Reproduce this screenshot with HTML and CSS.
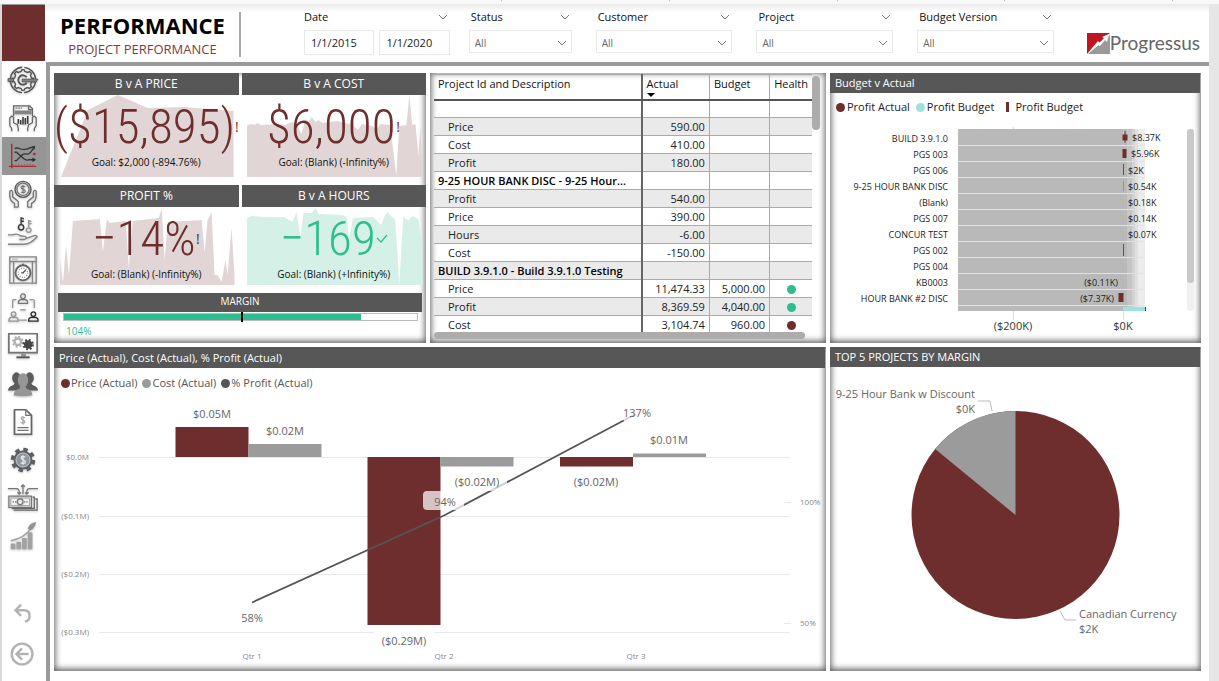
FILE: index.html
```html
<!DOCTYPE html>
<html lang="en">
<head>
<meta charset="utf-8">
<meta name="viewport" content="width=device-width, initial-scale=1">
<title>Project Performance</title>
<link rel="stylesheet" href="styles.css">
</head>
<body>
<svg class="sprite" aria-hidden="true">
  <symbol id="chev" viewBox="0 0 12 8"><path d="M2 2l4 4 4-4" fill="none" stroke="#777" stroke-width="1"/></symbol>
  <symbol id="person" viewBox="0 0 12 12"><circle cx="6" cy="3.5" r="2.5"/><path d="M1 11V9.500Q1.500 7 4 7h4q2.500 0 3 2.500V11z"/></symbol>
</svg>
<div class="toolbar-edge"><i></i><i></i><i></i><i></i><i></i></div>
<div class="shell">
  <aside class="side">
    <div class="brand-block"></div>
    <nav class="nav" aria-label="Report pages">
      <button aria-label="Overview"><svg viewBox="0 0 34 34"><g fill="none" stroke="#444" stroke-width="1.500"><circle cx="17" cy="17" r="13.500" stroke-dasharray="19 2.200" stroke-dashoffset="-1"/><path d="M15 8l1-2h2l1 2 3 1 2-1 2 2-1 2 1 3h2v4h-2l-1 3 1 2-2 2-2-1-3 1-1 2h-2l-1-2-3-1-2 1-2-2 1-2-1-3H6v-4h2l1-3-1-2 2-2 2 1z"/><path d="M21 14a5 5 0 1 0 0 6" stroke-width="2"/></g><path d="M1 15.500h6v3H1zM16 16h17l-2 3H16z" fill="#777" stroke="#333" stroke-width=".7"/></svg></button>
      <button aria-label="Reports"><svg viewBox="0 0 34 34"><g fill="none" stroke="#555" stroke-width="1.300"><path d="M7 15V4h17l3 3v8M23 4v4h4"/><path d="M5 31v-3l-2-3v-8l2-2 2 1v6l4 2 1 4v3M29 31v-3l2-3v-8l-2-2-2 1v6l-4 2-1 4v3"/></g><path d="M8 9h18v4H8z" fill="#777"/><path d="M9 6.500h7" stroke="#444" stroke-dasharray="2 1"/><path d="M12 23v-5M14.500 24v-5M17 24v-8M19.500 24v-7M22 23v-8" stroke="#222" stroke-width="1.600"/></svg></button>
      <button aria-label="Performance" class="active" aria-current="page"><svg viewBox="0 0 34 34"><path d="M5 4v26M2 28h29" fill="none" stroke="#a8252b" stroke-width="1.500"/><path d="M6 26.500h24" stroke="#a8252b" stroke-dasharray="1 2"/><g fill="none" stroke="#2a2a2a" stroke-width="1.400"><path d="M8 9q3-1 5 0t5 1q4 0 5-1t4-1"/><path d="M8 13h2l8 7q2 2 5 1h5"/><path d="M8 22h2l6-6q2-2 5-1 3 0 4-2l4-5"/></g><path d="M26 7l4-1-1 4zM27 18.500l4 2.500-4 2.500z" fill="#222"/><circle cx="29" cy="15" r="1.500" fill="#a8252b"/></svg></button>
      <button aria-label="Profit"><svg viewBox="0 0 34 34"><g fill="none" stroke="#666" stroke-width="1.400"><circle cx="17" cy="12" r="8.500" stroke="#444"/><circle cx="17" cy="12" r="6.500"/><path d="M3 19v-5q2-2 3 1v5l6 5v6M3 19q0 5 5 8v4h4M31 19v-5q-2-2-3 1v5l-6 5v6M31 19q0 5-5 8v4h-4M6 20l5 4M28 20l-5 4"/><path d="M19.500 9.500q-4-2-4.500.5c0 2.500 4.500 1.500 4.500 4q-.5 2.500-5 .8M17 7.500v9" stroke-width="1.200"/></g></svg></button>
      <button aria-label="Rates"><svg viewBox="0 0 34 34"><g fill="none"><circle cx="15" cy="12" r="2.800" stroke="#222" stroke-width="1.500"/><path d="M15 9V2l3 1M15 5.500h3" stroke="#222" stroke-width="1.500"/><circle cx="23" cy="15" r="2.500" stroke="#888" stroke-width="1.300"/><path d="M23 12V5l3 1M23 8h3" stroke="#888" stroke-width="1.300"/><path d="M1 20h5q5-2 8 1l6 1q2 2-2 3h-5M20 24l8-3q4-1 4 1-7 8-14 8H1" stroke="#777" stroke-width="1.400"/></g></svg></button>
      <button aria-label="Time"><svg viewBox="0 0 34 34"><g fill="none" stroke="#777" stroke-width="1.400"><path d="M3 3h28v28H3zM3 8h28M7 8v22M27 8v22"/><circle cx="17" cy="20" r="8" fill="#fff" stroke="#555" stroke-width="2"/><circle cx="17" cy="20" r="5" stroke-dasharray="1 1.600"/><path d="M17 10v2M17 20l3-3M15 20h3" stroke="#444"/></g><path d="M6 5.500h6" stroke="#555" stroke-dasharray="1 1"/></svg></button>
      <button aria-label="Team"><svg viewBox="0 0 34 34" fill="none" stroke="#888" stroke-width="1.300"><use href="#person" x="11" y="1" width="12" height="12" stroke="#666"/><use href="#person" x="1" y="20" width="12" height="12"/><use href="#person" x="22" y="20" width="12" height="12" stroke="#111"/><path d="M10 8H7q-1 0-1 1v8M24 8h3q2 0 2 1v8M14 19h6M13 30h8"/></svg></button>
      <button aria-label="Systems"><svg viewBox="0 0 34 34"><path d="M2 4h30v20H2z" fill="#fff" stroke="#666" stroke-width="1.800"/><path d="M15 25h5v3h-5z" fill="#888"/><path d="M10 29h14" stroke="#444" stroke-width="2"/><circle cx="11.500" cy="12.500" r="3.500" fill="none" stroke="#aaa" stroke-width="2.500"/><circle cx="11.500" cy="12.500" r="5.300" fill="none" stroke="#aaa" stroke-width="2" stroke-dasharray="2 2.160"/><circle cx="22.500" cy="15.500" r="4.500" fill="#333"/><circle cx="22.500" cy="15.500" r="5" fill="none" stroke="#333" stroke-width="2.200" stroke-dasharray="2 1.930"/></svg></button>
      <button aria-label="Customers"><svg viewBox="0 0 34 34"><g fill="#4b4b4b"><ellipse cx="10" cy="10.500" rx="4.500" ry="6"/><ellipse cx="24" cy="10.500" rx="4.500" ry="6"/><path d="M1 24q0-4 6-6l2-3h16l2 3q6 2 6 6z"/></g><g fill="#8b8b8b"><ellipse cx="17" cy="13" rx="5.500" ry="7.500"/><path d="M7 29q0-5 6-7l2-4h4l2 4q6 2 6 7-10 2-20 0z"/></g></svg></button>
      <button aria-label="Invoices"><svg viewBox="0 0 34 34"><path d="M8 4h12l6 6v20H8z" fill="#fff" stroke="#555" stroke-width="1.800"/><path d="M20 4v6h6M11 23h12M11 26h12" fill="none" stroke="#666" stroke-width="1.300"/><path d="M19 12.500q-4-2-4 .6c0 2.500 4 1.300 4 3.900q-.5 2.300-4.500.6M17 11v9" fill="none" stroke="#999" stroke-width="1.200"/></svg></button>
      <button aria-label="Costs"><svg viewBox="0 0 34 34"><circle cx="17" cy="17" r="10" fill="#4a4f55"/><circle cx="17" cy="17" r="11" fill="none" stroke="#4a4f55" stroke-width="4" stroke-dasharray="4.600 4.040"/><circle cx="17" cy="17" r="7.500" fill="#858b94" stroke="#c4c8ce"/><path d="M19.500 14q-4-2-4.500.7c0 2.800 5 1.600 4.500 4.500q-.5 2.500-5 .8M17 12v10" fill="none" stroke="#e5e7ea" stroke-width="1.400"/></svg></button>
      <button aria-label="Cash flow"><svg viewBox="0 0 34 34" fill="none" stroke="#666" stroke-width="1.300"><path d="M1 7h9q3 0 3 4v2M11 11l2 2 2-2M33 7h-9q-3 0-3 4v2M19 11l2 2 2-2M17 13V3M15 5l2-2 2 2"/><path d="M2 15h24v12H2z"/><path d="M4 17h20v8H4z" stroke="#888" stroke-width=".8"/><path d="M27 16h2v12H5M30 18h2v12H7" stroke="#555"/><circle cx="14" cy="21" r="3"/><path d="M6 21h4M18 21h5" stroke-dasharray="1.500 1"/></svg></button>
      <button aria-label="Growth"><svg viewBox="0 0 34 34" fill="#999"><path d="M4 25h5v6H4zM10 23h5v8h-5zM16 19h5v12h-5zM22 13h5v18h-5z"/><path d="M4 22Q19 19 26 8" fill="none" stroke="#999" stroke-width="1.500"/><path d="M22 9q2-6 9-7-1 6-6 9z" fill="#888"/></svg></button>
    </nav>
    <div class="nav tail">
      <button aria-label="Undo"><svg viewBox="0 0 34 34" fill="none" stroke="#aaa" stroke-width="2.500"><path d="M15 7l-6 6 6 6M9 13h9q6 0 6 6 0 5-5 6"/></svg></button>
      <button aria-label="Back"><svg viewBox="0 0 34 34" fill="none" stroke="#aaa" stroke-width="2.500"><circle cx="16" cy="17" r="11"/><path d="M16 11l-6 6 6 6M10 17h13"/></svg></button>
    </div>
  </aside>

  <div class="page">
    <header class="top">
      <div class="titles">
        <h1>PERFORMANCE</h1>
        <p>PROJECT PERFORMANCE</p>
      </div>
      <form class="slicers">
        <div class="slicer date">
          <div class="slicer-head"><label for="from">Date</label><button type="button" aria-label="Date options"><svg><use href="#chev"/></svg></button></div>
          <div class="range"><input id="from" type="text" value="1/1/2015"><input type="text" aria-label="End date" value="1/1/2020"></div>
        </div>
        <div class="slicer narrow">
          <div class="slicer-head"><label for="status">Status</label><button type="button" aria-label="Status options"><svg><use href="#chev"/></svg></button></div>
          <div class="pick"><select id="status"><option>All</option></select><svg><use href="#chev"/></svg></div>
        </div>
        <div class="slicer">
          <div class="slicer-head"><label for="customer">Customer</label><button type="button" aria-label="Customer options"><svg><use href="#chev"/></svg></button></div>
          <div class="pick"><select id="customer"><option>All</option></select><svg><use href="#chev"/></svg></div>
        </div>
        <div class="slicer">
          <div class="slicer-head"><label for="project">Project</label><button type="button" aria-label="Project options"><svg><use href="#chev"/></svg></button></div>
          <div class="pick"><select id="project"><option>All</option></select><svg><use href="#chev"/></svg></div>
        </div>
        <div class="slicer">
          <div class="slicer-head"><label for="version">Budget Version</label><button type="button" aria-label="Budget Version options"><svg><use href="#chev"/></svg></button></div>
          <div class="pick"><select id="version"><option>All</option></select><svg><use href="#chev"/></svg></div>
        </div>
      </form>
      <div class="logo">
        <svg viewBox="0 0 23 21" aria-hidden="true"><path d="M0 0h23L0 21z" fill="#bf1722"/><path d="M23 2v19H1z" fill="#9a9a9a"/><path d="M0 21L11 8l2 2 4-5-2-1 7-3-2 8-2-2-5 6-2-1z" fill="#fff"/></svg>
        <span>Progressus</span>
      </div>
    </header>

    <main class="board">
      <section class="panel kpis">
        <div class="kpi-grid">
          <article class="kpi bad">
            <h2>B v A PRICE</h2>
            <div class="kpi-body">
              <svg class="spark" viewBox="0 0 185 82" preserveAspectRatio="none"><path d="M7 82L34 15 64 0 94 13 131 12 155 14 180 16V82z"/></svg>
              <div class="kpi-text"><div class="value">($15,895)<span class="mark">!</span></div><p>Goal: $2,000 (-894.76%)</p></div>
            </div>
          </article>
          <article class="kpi bad">
            <h2>B v A COST</h2>
            <div class="kpi-body">
              <svg class="spark" viewBox="0 0 183 82" preserveAspectRatio="none"><path d="M5 82V30L9 29 13 30 15 28 19 30 37 29 42 30 50 27 55 30 59 39 63 24 66 27 69 22 73 27 76 25 80 28 94 26 107 29 109 21 111 31 115 35 119 29 129 31 134 34 137 29 147 30 153 81 156 31 163 30 166 1 169 30 172 29 175 61 177 31 179 82z"/></svg>
              <div class="kpi-text"><div class="value">$6,000<span class="mark">!</span></div><p>Goal: (Blank) (-Infinity%)</p></div>
            </div>
          </article>
          <article class="kpi bad low">
            <h2>PROFIT %</h2>
            <div class="kpi-body">
              <svg class="spark" viewBox="0 0 185 78" preserveAspectRatio="none"><path d="M6 78V52L9 76 12 38 15 68 19 14 46 12 49 45 53 12 56 16 72 14 75 61 79 14 105 11 108 2 111 53 114 15 148 13 151 45 154 13 158 5 161 68 164 68 168 75 172 53 174 68 178 21 181 68V78z"/></svg>
              <div class="kpi-text"><div class="value">−14%<span class="mark dark">!</span></div><p>Goal: (Blank) (-Infinity%)</p></div>
            </div>
          </article>
          <article class="kpi good low">
            <h2>B v A HOURS</h2>
            <div class="kpi-body">
              <svg class="spark" viewBox="0 0 183 78" preserveAspectRatio="none"><path d="M5 78V11L10 9 24 10 42 10 50 15 54 5 58 30 61 6 69 6 73 1 76 7 100 8 104 10 106 33 110 11 130 10 138 18 141 10 144 5 149 10 152 12 156 77 160 10 165 13 169 9 175 12 179 40V78z"/></svg>
              <div class="kpi-text"><div class="value">−169<svg class="tick" viewBox="0 0 12 10"><path d="M1 4l4 4 6-7" fill="none" stroke="#2ebd90" stroke-width="1.200"/></svg></div><p>Goal: (Blank) (+Infinity%)</p></div>
            </div>
          </article>
        </div>
        <div class="margin-box">
          <h2>MARGIN</h2>
          <div class="gauge"><div class="fill" style="width:84%"></div><i></i></div>
          <p>104%</p>
        </div>
      </section>

      <section class="panel matrix">
        <div class="scroll-x">
          <table>
            <colgroup><col class="c1"><col class="c2"><col class="c3"><col class="c4"></colgroup>
            <thead><tr><th>Project Id and Description</th><th><span class="sorted">Actual</span></th><th>Budget</th><th>Health</th></tr></thead>
            <tbody>
              <tr><td></td><td></td><td></td><td></td></tr>
              <tr><td>Price</td><td>590.00</td><td></td><td></td></tr>
              <tr><td>Cost</td><td>410.00</td><td></td><td></td></tr>
              <tr><td>Profit</td><td>180.00</td><td></td><td></td></tr>
              <tr class="group"><td>9-25 HOUR BANK DISC - 9-25 Hour...</td><td></td><td></td><td></td></tr>
              <tr><td>Profit</td><td>540.00</td><td></td><td></td></tr>
              <tr><td>Price</td><td>390.00</td><td></td><td></td></tr>
              <tr><td>Hours</td><td>-6.00</td><td></td><td></td></tr>
              <tr><td>Cost</td><td>-150.00</td><td></td><td></td></tr>
              <tr class="group"><td>BUILD 3.9.1.0 - Build 3.9.1.0 Testing</td><td></td><td></td><td></td></tr>
              <tr><td>Price</td><td>11,474.33</td><td>5,000.00</td><td><span class="dot ok"></span></td></tr>
              <tr><td>Profit</td><td>8,369.59</td><td>4,040.00</td><td><span class="dot ok"></span></td></tr>
              <tr><td>Cost</td><td>3,104.74</td><td>960.00</td><td><span class="dot off"></span></td></tr>
            </tbody>
          </table>
          <div class="bar-y"></div>
        </div>
        <div class="bar-x"></div>
      </section>

      <section class="panel">
        <h2 class="bar-title">Budget v Actual</h2>
        <ul class="legend dark-text">
          <li><span class="key maroon"></span>Profit Actual</li>
          <li><span class="key aqua"></span>Profit Budget</li>
          <li><span class="key stick"></span>Profit Budget</li>
        </ul>
        <svg class="chart" viewBox="0 0 371 226">
          <path d="M128 14h187v182H128z" fill="#ececec"/>
          <path d="M128 14h180v182H128z" fill="#e0e0e0"/><path d="M128 14h177v182H128z" fill="#d2d2d2"/><path d="M128 14h174v182H128z" fill="#c5c5c5"/><path d="M128 14h169v182H128z" fill="#b9b9b9"/>
          <path d="M128 30.500h187M128 46.500h187M128 62.500h187M128 78.500h187M128 94.500h187M128 110.500h187M128 126.500h187M128 142.500h187M128 158.500h187M128 174.500h187M128 190.500h187" stroke="#e2e2e2"/>
          <path d="M183.500 196v9M293.500 196v9M183.500 12v2" stroke="#ddd"/>
          <path d="M293 16h1v12h-1z" fill="#98e3dc"/>
          <path d="M292.500 19.500h5v6h-5zM294.500 16h1v12h-1zM292.500 34h4v9h-4zM288.500 178h5v9h-5z" fill="#6e2e2d"/>
          <path d="M293.500 49v11M293.500 129v12" stroke="#7d4645"/>
          <path d="M293.500 66v10" stroke="#a48b8b"/>
          <path d="M293 192h22v4h-22z" fill="#98e3dc"/><path d="M315 192h1v4h-1z" fill="#6e2e2d"/>
          <g class="t10" text-anchor="end"><text x="118" y="27">BUILD 3.9.1.0</text><text x="118" y="43">PGS 003</text><text x="118" y="59">PGS 006</text><text x="118" y="75">9-25 HOUR BANK DISC</text><text x="118" y="91">(Blank)</text><text x="118" y="107">PGS 007</text><text x="118" y="123">CONCUR TEST</text><text x="118" y="139">PGS 002</text><text x="118" y="155">PGS 004</text><text x="118" y="171">KB0003</text><text x="118" y="187">HOUR BANK #2 DISC</text><text x="288" y="171">($0.11K)</text><text x="284" y="187">($7.37K)</text></g>
          <g class="t10"><text x="302" y="26">$8.37K</text><text x="301" y="42">$5.96K</text><text x="298" y="59">$2K</text><text x="298" y="75">$0.54K</text><text x="298" y="91">$0.18K</text><text x="298" y="107">$0.14K</text><text x="298" y="123">$0.07K</text></g>
          <g class="t11" text-anchor="middle"><text x="183" y="215">($200K)</text><text x="293" y="215">$0K</text></g>
          <rect x="357" y="14" width="7" height="182" rx="3" fill="#f0f0f0"/><rect x="357" y="14" width="7" height="154" rx="3" fill="#c8c8c8"/>
        </svg>
      </section>

      <section class="panel wide">
        <h2 class="bar-title">Price (Actual), Cost (Actual), % Profit (Actual)</h2>
        <ul class="legend">
          <li><span class="key maroon"></span>Price (Actual)</li>
          <li><span class="key grey"></span>Cost (Actual)</li>
          <li><span class="key slate"></span>% Profit (Actual)</li>
        </ul>
        <svg class="chart" viewBox="0 0 772 275">
          <path d="M45 66.500h691M45 125.500h691M45 183.500h691M45 241.500h275M380 241.500h356M730 111.500h7M730 232.500h7" stroke="#e8e8e8"/>
          <path d="M121.500 36h73v30h-73zM313.500 66h73v168h-73zM506 66h73v9.500h-73z" fill="#6e2e2d"/>
          <path d="M194.500 53h73v13h-73zM386.500 66h73v9.500h-73zM579 62.500h73V66h-73z" fill="#9b9b9b"/>
          <path d="M198 211.500L390 124.500 582 23" fill="none" stroke="#555" stroke-width="1.800"/>
          <rect x="369" y="100" width="41" height="19" rx="4" fill="#fff" opacity=".72"/>
          <rect x="397" y="82" width="56" height="18" rx="4" fill="#fff" opacity=".72"/>
          <rect x="569" y="12" width="30" height="19" rx="4" fill="#fff" opacity=".72"/>
          <g class="t11 soft" text-anchor="middle"><text x="158" y="27">$0.05M</text><text x="231" y="44">$0.02M</text><text x="423" y="95">($0.02M)</text><text x="391" y="115">94%</text><text x="583" y="26">137%</text><text x="615" y="53">$0.01M</text><text x="542" y="95">($0.02M)</text><text x="198" y="231">58%</text><text x="350" y="254">($0.29M)</text></g>
          <g class="t8" text-anchor="end"><text x="35" y="69">$0.0M</text><text x="35" y="128">($0.1M)</text><text x="35" y="186">($0.2M)</text><text x="35" y="244">($0.3M)</text></g>
          <g class="t8"><text x="746" y="114">100%</text><text x="746" y="235">50%</text></g>
          <g class="t8" text-anchor="middle"><text x="198" y="268">Qtr 1</text><text x="390" y="268">Qtr 2</text><text x="582" y="268">Qtr 3</text></g>
        </svg>
      </section>

      <section class="panel">
        <h2 class="bar-title">TOP 5 PROJECTS BY MARGIN</h2>
        <svg class="chart" viewBox="0 0 371 300">
          <circle cx="185.500" cy="148" r="104" fill="#6e2e2d"/>
          <path d="M185.500 148V44A104 104 0 0 0 105.200 82z" fill="#9b9b9b"/>
          <path d="M148 34h12l2 10M230 244l5 9h11" fill="none" stroke="#bbb"/>
          <g class="t11 soft" text-anchor="end"><text x="145" y="31">9-25 Hour Bank w Discount</text><text x="145" y="46">$0K</text></g>
          <g class="t11 soft"><text x="249" y="251">Canadian Currency</text><text x="249" y="266">$2K</text></g>
        </svg>
      </section>
    </main>
  </div>
</div>
</body>
</html>
```
FILE: styles.css
```css
* { box-sizing: border-box; }
body {
  margin: 0;
  min-height: 100vh;
  display: flex;
  flex-direction: column;
  background: #e6e6e6;
  color: #222;
  font: 11px/16px "Open Sans", "Noto Sans", sans-serif;
}
h1, h2, p, ul { margin: 0; padding: 0; }
button, input, select { font: inherit; color: inherit; }
.sprite { position: absolute; width: 0; height: 0; }

.toolbar-edge {
  height: 4px;
  background: #f8f8f8;
  display: flex;
  justify-content: space-between;
  padding: 0 46px 0 501px;
}
.toolbar-edge i { width: 1px; height: 1px; background: #bbb; }

.shell { flex: 1; display: flex; padding-right: 10px; }

.side {
  width: 46px;
  flex: none;
  display: flex;
  flex-direction: column;
  background: #fff;
  border-left: 2px solid #d9d9d9;
  padding-bottom: 8px;
}
.brand-block { height: 57px; margin: 0 1px 0 0; background: #6e2e2d; border-top: 1px solid #999; }
.nav { display: flex; flex-direction: column; }
.nav button {
  height: 38px;
  padding: 0 2px 0 0;
  border: 0;
  background: none;
  display: grid;
  place-items: center;
}
.nav svg { width: 32px; height: 32px; filter: drop-shadow(0 1px 1px #bbb); opacity: .9; }
.nav .active { background: #959595; }
.nav .active svg { filter: none; }
.tail { margin-top: auto; gap: 2px; }
.tail svg { filter: none; }

.page { flex: 1; min-width: 0; display: flex; flex-direction: column; background: #fff; }
.top {
  display: flex;
  align-items: flex-start;
  height: 62px;
  padding: 8px 9px 0 0;
  border-bottom: 4px solid #9a9a9a;
  background: linear-gradient(#e9e9e9, #fff 8px);
}
.titles {
  width: 195px;
  height: 45px;
  flex: none;
  border-right: 2px solid #aaa;
  text-align: center;
}
.titles h1 { font-size: 22px; line-height: 26px; color: #000; }
.titles p { font-size: 13px; line-height: 22px; color: #7d3d3c; }
.slicers { display: flex; gap: 24px; margin-left: 63px; flex: 0 1 750px; }
.slicer { flex: 1 1 137px; min-width: 0; }
.slicer.date { flex-basis: 146px; margin-right: -5px; }
.slicer.narrow { flex-basis: 103px; }
.slicer-head { display: flex; justify-content: space-between; align-items: center; height: 18px; padding: 0 0 8px 2px; color: #111; }
.date .slicer-head { padding-left: 0; }
.slicer-head button { border: 0; background: none; padding: 0; margin-right: 1px; height: 8px; display: grid; }
.slicer-head svg, .pick svg { width: 12px; height: 8px; }
.range { display: flex; gap: 5px; }
.range input { width: 100%; min-width: 0; height: 25px; padding: 0 6px; border: 1px solid #e8e8e8; background: #fff; }
.pick { position: relative; }
.pick select { appearance: none; width: 100%; height: 23px; padding: 2px 5px 0; border: 1px solid #eaeaea; border-radius: 0; background: #fff; color: #666; font-size: 10px; }
.pick svg { position: absolute; right: 4px; top: 9px; pointer-events: none; }
.logo { margin: 19px 0 0 auto; display: flex; align-items: center; }
.logo svg { width: 23px; height: 21px; }
.logo span { font: 19px/24px Lato, sans-serif; color: #666; }

.board {
  flex: 1;
  display: grid;
  grid-template-columns: 372fr 396fr 371fr;
  grid-template-rows: auto 1fr;
  gap: 4px;
  padding: 7px 8px 10px 4px;
  border-left: 4px solid #9a9a9a;
}
.panel { min-width: 0; background: #fff; box-shadow: inset 0 -1px 6px 1px rgba(0, 0, 0, .65); }
.wide { grid-column: span 2; }
.bar-title { margin: 0 1px 0 0; padding: 0 5px; background: #575757; color: #fff; font-size: 11px; line-height: 20px; font-weight: 500; }
.wide .bar-title { font-weight: 400; line-height: 21px; }
.chart { display: block; width: 100%; }
.t10 { font-size: 9px; fill: #222; }
.t11 { font-size: 11px; fill: #333; }
.t8 { font-size: 8px; fill: #888; }
.soft { fill: #666; }

.kpi-grid { display: grid; grid-template-columns: 1fr 1fr; column-gap: 3px; }
.kpi h2 { background: #575757; color: #fff; text-align: center; font-weight: 400; font-size: 12px; line-height: 22px; }
.kpi-body { display: grid; height: 90px; }
.low .kpi-body { height: 86px; }
.kpi-body > * { grid-area: 1 / 1; min-width: 0; }
.spark { width: 100%; height: 82px; fill: #e1d5d5; }
.low .spark { height: 78px; }
.good .spark { fill: #d5f1e7; }
.kpi-text { text-align: center; }
.value { display: flex; justify-content: center; align-items: center; height: 60px; padding-top: 4px; white-space: nowrap; color: #6e2e2d; font: 300 49px/56px "Roboto Condensed", "Liberation Sans Narrow", Roboto, sans-serif; }
.good .value { color: #2ebd90; }
.mark { width: 5px; font: 14px/16px "Open Sans", sans-serif; }
.mark.dark { color: #334; }
.tick { width: 12px; height: 10px; }
.kpi-text p { font-size: 10px; line-height: 15px; color: #111; }
.margin-box { margin: 0 4px; height: 50px; }
.margin-box h2 { background: #575757; color: #fff; text-align: center; font-size: 10px; line-height: 17px; font-weight: 500; height: 19px; margin-bottom: 1px; }
.gauge { position: relative; height: 8px; margin: 0 4px 0 5px; border: 1px solid #bbb; }
.gauge .fill { height: 100%; background: #2ebd90; }
.gauge i { position: absolute; left: 50%; top: -2px; width: 2px; height: 10px; background: #000; }
.margin-box p { padding-left: 8px; font-size: 10px; line-height: 20px; color: #2ebd90; }

.matrix { padding: 1px 6px 0 4px; }
.scroll-x { display: flex; height: 258px; overflow: hidden; }
table { flex: 1; min-width: 0; table-layout: fixed; border-collapse: collapse; align-self: flex-start; color: #222; }
.c1 { width: 55%; } .c2 { width: 18%; } .c3 { width: 16%; } .c4 { width: 11%; }
th { height: 25px; padding: 0 4px 6px; font-weight: 400; text-align: left; color: #111; line-height: 14px; border-bottom: 2px solid #555; border-top: 1px solid #aaa; white-space: nowrap; }
td { height: 18px; padding: 0 4px; line-height: 14px; text-align: right; border-bottom: 1px solid #aaa; white-space: nowrap; }
th:first-child, td:first-child { text-align: left; border-right: 2px solid #666; }
td:first-child { padding-left: 14px; }
.group td:first-child { padding-left: 4px; font-weight: 600; color: #000; }
th:not(:first-child):not(:last-child), td:not(:first-child):not(:last-child) { border-right: 1px solid #aaa; }
td:last-child { text-align: center; }
tbody tr:nth-child(even) { background: #eaeaea; }
.sorted { position: relative; }
.sorted::after { content: ""; position: absolute; left: 0; top: 17px; border: 4px solid transparent; border-top-color: #000; border-bottom: 0; }
.dot { display: inline-block; width: 9px; height: 9px; border-radius: 50%; vertical-align: middle; }
.ok { background: #2ebd90; }
.off { background: #6e2e2d; }
.bar-y { width: 8px; height: 54px; margin-top: 2px; border-radius: 4px; background: #adacab; }
.bar-x { width: 96%; height: 7px; border-radius: 4px; background: #adacab; }

.legend { display: flex; gap: 5px; list-style: none; padding: 7px 7px 0; color: #555; }
.legend li { display: flex; align-items: center; gap: 1px; }
.dark-text { color: #222; padding: 6px 6px 0; gap: 6px; }
.dark-text li { gap: 2px; }
.key { width: 9px; height: 9px; border-radius: 50%; }
.maroon { background: #6e2e2d; }
.aqua { background: #98e3dc; }
.grey { background: #9b9b9b; }
.slate { background: #555; }
.stick { width: 3px; height: 10px; border-radius: 0; margin: 0 4px 0 6px; background: #6e2e2d; }
```
